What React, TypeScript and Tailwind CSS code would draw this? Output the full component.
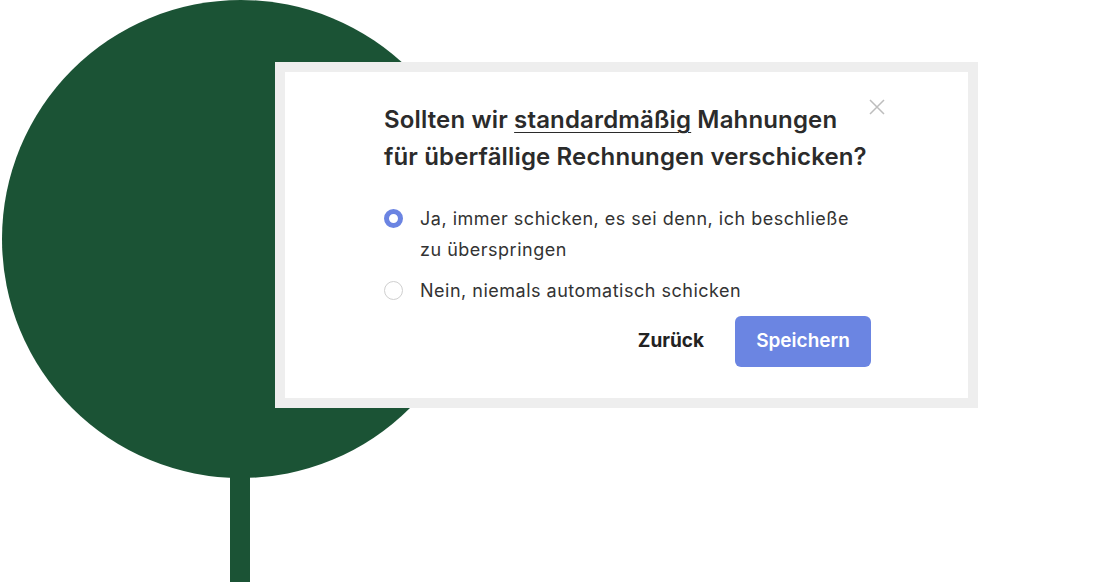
import React, { useState } from 'react';

const font = { fontFamily: 'Inter, "Noto Sans", sans-serif' };

const Radio = ({ checked }: { checked: boolean }) => (
  <span
    className={`mt-[6px] block w-[19px] h-[19px] shrink-0 rounded-full bg-white ${
      checked ? 'border-[5px] border-[#6b84e2]' : 'border border-[#cfcfcf]'
    }`}
  />
);

export default function App() {
  const [choice, setChoice] = useState<'always' | 'never'>('always');

  return (
    <div className="relative w-[1110px] h-[583px] overflow-hidden bg-white" style={font}>
      {/* decorative tree */}
      <div className="absolute left-[2px] top-0 w-[478px] h-[478px] rounded-full bg-[#1b5335]" />
      <div className="absolute left-[230px] top-[470px] w-[20px] h-[112px] bg-[#1b5335]" />

      <div className="relative ml-[275px] pt-[62px]">
        <div className="w-[703px] border-[10px] border-[#eeeeee] bg-white">
          <div className="relative pl-[99px] pr-[97px] pt-[29px] pb-[31px]">
            <button className="absolute left-[584px] top-[27px] w-[16px] h-[16px] text-[#bdbdbd]">
              <svg viewBox="0 0 16 16" className="w-4 h-4" fill="none" stroke="currentColor" strokeWidth="1.5">
                <path d="M1 1 L15 15 M15 1 L1 15" />
              </svg>
            </button>

            <h2 className="text-[24px] leading-[37px] font-semibold tracking-[0.15px] text-[#2b2b2b]">
              Sollten wir <span className="underline underline-offset-[4px] decoration-1">standardmäßig</span> Mahnungen
              <br />
              für überfällige Rechnungen verschicken?
            </h2>

            <div className="mt-[28px] flex flex-col gap-[10px] text-[18px] leading-[31px] tracking-[0.5px] text-[#333333]">
              <label className="flex gap-[17px] cursor-pointer" onClick={() => setChoice('always')}>
                <Radio checked={choice === 'always'} />
                <span className="w-[450px]">Ja, immer schicken, es sei denn, ich beschließe zu überspringen</span>
              </label>
              <label className="flex gap-[17px] cursor-pointer" onClick={() => setChoice('never')}>
                <Radio checked={choice === 'never'} />
                <span>Nein, niemals automatisch schicken</span>
              </label>
            </div>

            <div className="mt-[10px] flex items-center justify-end gap-[31px]">
              <button className="text-[19px] font-bold text-[#222222]">Zurück</button>
              <button className="w-[136px] h-[51px] rounded-[6px] bg-[#6b85e2] text-[19px] font-semibold text-white">
                Speichern
              </button>
            </div>
          </div>
        </div>
      </div>
    </div>
  );
}
